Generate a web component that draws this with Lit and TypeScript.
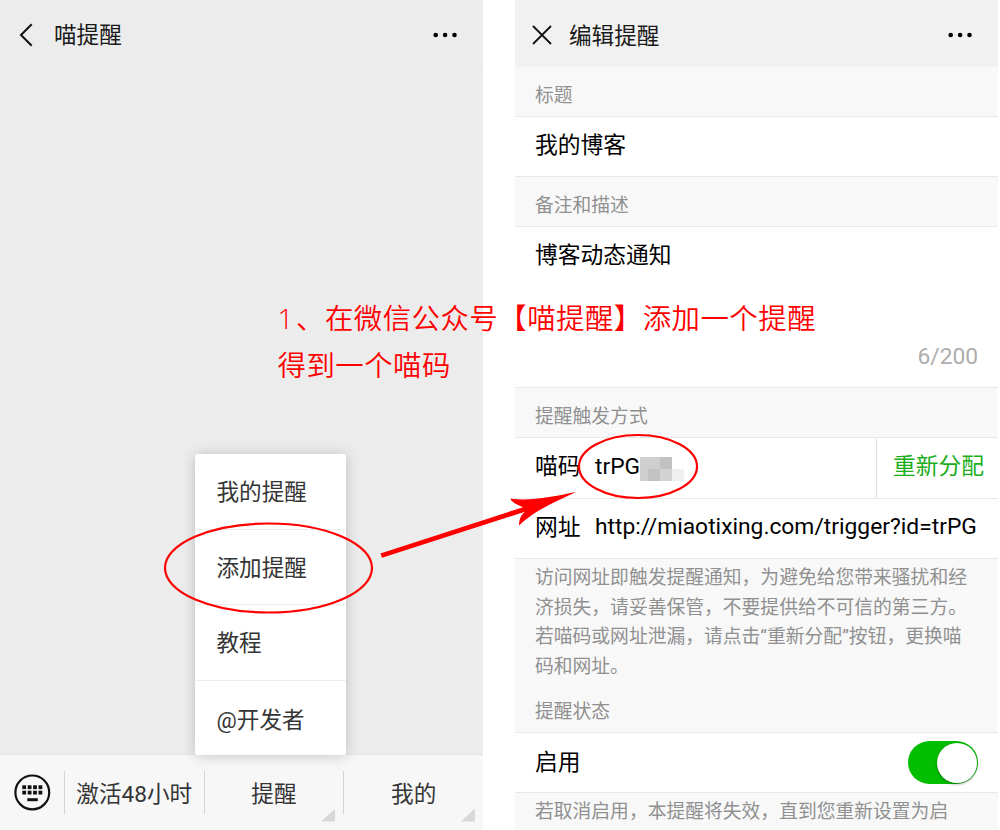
import { LitElement, html, css, svg } from "lit";
import { customElement } from "lit/decorators.js";

const dots = html`<svg class="dots" width="25" height="6" viewBox="0 0 25 6">
  <circle cx="2.7" cy="3" r="2.3" /><circle cx="12.1" cy="3" r="2.3" /><circle cx="21.5" cy="3" r="2.3" />
</svg>`;

const base = css`
  * { box-sizing: border-box; }
  :host {
    display: block;
    font-family: Roboto, "Noto Sans CJK SC", sans-serif;
    font-size: 22.6px;
    font-weight: 400;
    white-space: nowrap;
  }
  svg { display: block; flex: none; }
`;

@customElement("chat-pane")
class ChatPane extends LitElement {
  static styles = [base, css`
    :host { position: relative; width: 483px; height: 830px; background: #ececec; color: #353535; }
    .pane { height: 100%; display: flex; flex-direction: column; }
    .head { height: 68px; display: flex; align-items: center; padding: 3px 25px 0 19px; border-bottom: 1px solid #e9e9e9; color: #1a1a1a; }
    .title { flex: 1; margin-left: 21px; padding-bottom: 4px; }
    .body { flex: 1; }
    .bar { height: 76px; background: #f7f7f7; border-top: 1px solid #e2e2e2; display: flex; align-items: center; padding-bottom: 1px; }
    .keys { width: 64px; padding-left: 14px; }
    .tab { position: relative; height: 43px; width: 140px; border-left: 1px solid #d4d4d4; display: flex; align-items: center; justify-content: center; padding-top: 1px; }
    .corner { position: absolute; right: 8px; bottom: -8px; width: 14px; height: 13px; background: #d8d8d8; clip-path: polygon(100% 0, 100% 100%, 0 100%); }
    .menu { position: absolute; left: 195px; top: 454px; width: 150.5px; height: 300.5px; background: #fff; border-radius: 2px; box-shadow: 0 1px 14px rgba(0,0,0,.2); }
    .item { height: 75.6px; padding: 0 0 1px 21.5px; display: flex; align-items: center; border-bottom: 1px solid #ededed; }
    .item:last-child { border: 0; }
  `];
  render() {
    const cols = [0, 1, 2, 3];
    return html`<div class="pane">
      <div class="head">
        <svg width="14" height="24" viewBox="0 0 14 24" fill="none" stroke="#111" stroke-width="2"><path d="M12.7 1.2 2 12 12.7 22.8" /></svg>
        <span class="title">喵提醒</span>${dots}
      </div>
      <div class="body"></div>
      <div class="bar">
        <div class="keys">
          <svg width="37" height="37" viewBox="0 0 37 37">
            <circle cx="18.3" cy="18.4" r="16.9" fill="none" stroke="#111" stroke-width="2.2" />
            ${cols.map((c) => svg`<rect x=${8.3 + c * 5.4} y="11.3" width="3.8" height="3.8" fill="#111" /><rect x=${8.3 + c * 5.4} y="16.7" width="3.8" height="3.8" fill="#111" />`)}
            <rect x="13.3" y="24.2" width="10.5" height="3" fill="#111" />
          </svg>
        </div>
        <div class="tab">激活48小时</div>
        <div class="tab">提醒<i class="corner"></i></div>
        <div class="tab">我的<i class="corner"></i></div>
      </div>
      <div class="menu">
        ${["我的提醒", "添加提醒", "教程", "@开发者"].map((t) => html`<div class="item">${t}</div>`)}
      </div>
    </div>`;
  }
}

@customElement("edit-pane")
class EditPane extends LitElement {
  static styles = [base, css`
    :host { width: 483px; height: 830px; overflow: hidden; background: #f8f8f8; color: #000; }
    .head { height: 67px; display: flex; align-items: center; padding: 3px 25px 0 17px; background: #f1f1f1; color: #1a1a1a; }
    .title { flex: 1; margin-left: 17px; padding-bottom: 2px; }
    .label { height: 49px; padding: 4px 20px 0; display: flex; align-items: center; font-size: 18.8px; color: #909090; }
    .cell { height: 61px; padding: 0 20px 7px; display: flex; align-items: center; background: #fff; border-top: 1px solid #e8e8e8; border-bottom: 1px solid #e8e8e8; font-size: 22.75px; }
    .area { height: 162px; display: flex; flex-direction: column; justify-content: space-between; padding: 15px 20px 17px; background: #fff; border-top: 1px solid #e8e8e8; border-bottom: 1px solid #e8e8e8; font-size: 22.75px; line-height: 27px; }
    .count { align-self: flex-end; color: #adadad; }
    .key { width: 60px; }
    .code { height: 61px; padding: 0 0 0 20px; border-bottom: 0; }
    .code span { padding-bottom: 4px; }
    .cell .key { padding-bottom: 7px; }
    .mosaic { width: 44px; height: 24px; margin-top: 1px; }
    .reset { margin-left: auto; height: 60px; width: 122px; padding: 0 0 8px 16px; display: flex; align-items: center; border-left: 1px solid #e0e0e0; color: #1aad19; }
    .url { height: 61px; padding: 0 20px 0; font-size: 22.82px; }
    .url span { padding-bottom: 4px; }
    .note { padding: 5px 20px 0; font-size: 18.8px; line-height: 29.6px; color: #909090; }
    .state { height: 50px; }
    .on { justify-content: space-between; padding-bottom: 0; }
    .on span { padding-bottom: 5px; }
    .switch { width: 70px; height: 43px; border-radius: 22px; background: #04be02; display: flex; justify-content: flex-end; padding: 1.5px; }
    .knob { width: 40px; height: 40px; border-radius: 50%; background: #fff; box-shadow: 0 1px 3px rgba(0,0,0,.4); }
  `];
  render() {
    return html`
      <div class="head">
        <svg width="20" height="20" viewBox="0 0 20 20" stroke="#111" stroke-width="1.8"><path d="M1 1 19 19M19 1 1 19" /></svg>
        <span class="title">编辑提醒</span>${dots}
      </div>
      <div class="label">标题</div>
      <div class="cell">我的博客</div>
      <div class="label">备注和描述</div>
      <div class="area"><div>博客动态通知</div><div class="count">6/200</div></div>
      <div class="label">提醒触发方式</div>
      <div class="cell code">
        <span class="key">喵码</span><span>trPG</span>
        <svg class="mosaic" viewBox="0 0 44 24" shape-rendering="crispEdges">
          <path fill="#cfcfcf" d="M0 0h20v12H8v12H0z" /><path fill="#c2c2c2" d="M20 0h12v12H20zM8 12h12v12H8z" />
          <path fill="#d3d3d3" d="M20 12h12v12H20z" /><path fill="#f0f0f0" d="M32 12h12v12H32z" />
        </svg>
        <div class="reset">重新分配</div>
      </div>
      <div class="cell url"><span class="key">网址</span><span>http://miaotixing.com/trigger?id=trPG</span></div>
      <div class="note">访问网址即触发提醒通知，为避免给您带来骚扰和经<br />济损失，请妥善保管，不要提供给不可信的第三方。<br />若喵码或网址泄漏，请点击“重新分配”按钮，更换喵<br />码和网址。</div>
      <div class="label state">提醒状态</div>
      <div class="cell on"><span>启用</span><div class="switch"><div class="knob"></div></div></div>
      <div class="note">若取消启用，本提醒将失效，直到您重新设置为启</div>`;
  }
}

@customElement("app-root")
class AppRoot extends LitElement {
  static styles = [base, css`
    :host { position: relative; width: 1000px; height: 830px; overflow: hidden; background: #fff; }
    .panes { display: flex; gap: 32px; }
    .marks { position: absolute; left: 0; top: 0; }
    .tip { position: absolute; left: 277.5px; top: 293px; color: #f00; font-family: "Noto Sans CJK SC", sans-serif; font-weight: 350; font-size: 28.4px; letter-spacing: .5px; line-height: 47px; }
    .num { display: inline-block; width: 18.5px; font-family: "Open Sans", sans-serif; font-size: 28px; line-height: 1; }
  `];
  render() {
    return html`
      <div class="panes"><chat-pane></chat-pane><edit-pane></edit-pane></div>
      <svg class="marks" width="1000" height="830" viewBox="0 0 1000 830">
        <g fill="none" stroke="#f00" stroke-width="2.2">
          <ellipse cx="268.5" cy="568" rx="103.5" ry="44.5" /><ellipse cx="638" cy="466.5" rx="59" ry="31.5" />
        </g>
        <path fill="#f00" d="M380.4 553.4 523 507.2C517 504.500 511 502 510.500 498.500C530 501.500 553 496.500 576 492C557 501 535 510 519 525.500C519 519 521 515 525 511.700L382 557.700Z" />
      </svg>
      <div class="tip"><span class="num">1</span>、在微信公众号【喵提醒】添加一个提醒<br />得到一个喵码</div>`;
  }
}
